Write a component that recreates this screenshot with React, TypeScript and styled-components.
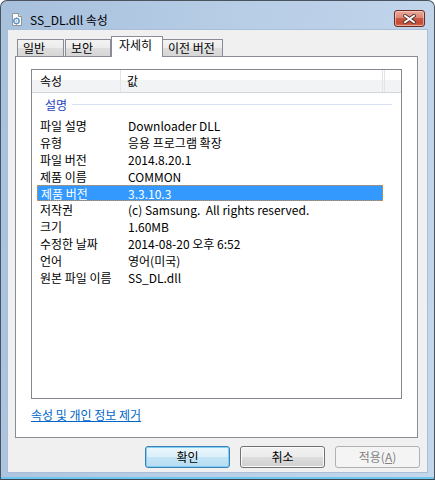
import React from 'react'
import styled, { createGlobalStyle } from 'styled-components'

const GlobalStyle = createGlobalStyle`
  html, body {
    margin: 0;
    padding: 0;
    background: #ffffff;
  }
  body {
    font-family: "Noto Sans CJK KR", "Liberation Sans", sans-serif;
    font-size: 12px;
    color: #000;
  }
`

type Row = { name: string; value: string; selected?: boolean }

const rows: Row[] = [
    { name: '파일 설명', value: 'Downloader DLL' },
    { name: '유형', value: '응용 프로그램 확장' },
    { name: '파일 버전', value: '2014.8.20.1' },
    { name: '제품 이름', value: 'COMMON' },
    { name: '제품 버전', value: '3.3.10.3', selected: true },
    { name: '저작권', value: '(c) Samsung.  All rights reserved.' },
    { name: '크기', value: '1.60MB' },
    { name: '수정한 날짜', value: '2014-08-20 오후 6:52' },
    { name: '언어', value: '영어(미국)' },
    { name: '원본 파일 이름', value: 'SS_DL.dll' },
]

const tabs = [
    { label: '일반', width: 47, ml: 0 },
    { label: '보안', width: 46, ml: 1 },
    { label: '자세히', width: 52, ml: 0, active: true },
    { label: '이전 버전', width: 61, ml: -1 },
]

const DllIcon = () => (
    <svg width="12" height="13" viewBox="0 0 12 13">
        <path d="M1.5 0.5 H7.5 L10.5 3.5 V12.5 H1.5 Z" fill="#fdfdfd" stroke="#8f959c" />
        <path d="M7.5 0.5 V3.5 H10.5" fill="#e4e8ec" stroke="#8f959c" />
        <circle cx="5.5" cy="8" r="2.6" fill="none" stroke="#5b8fc4" strokeWidth="1.4" />
        <circle cx="5.5" cy="8" r="0.9" fill="#9cc1e4" />
        <path d="M5.5 4.6 V5.4 M5.5 10.6 V11.4 M2.1 8 H2.9 M8.1 8 H8.9" stroke="#5b8fc4" strokeWidth="1.2" />
    </svg>
)

export default function App() {
    return (
        <>
            <GlobalStyle />
            <Window>
                <TitleBar>
                    <IconSlot>
                        <DllIcon />
                    </IconSlot>
                    <TitleText>SS_DL.dll 속성</TitleText>
                    <CloseButton type="button">
                        <svg width="13" height="10" viewBox="0 0 13 10">
                            <path d="M2 1.8 L11 8.2 M11 1.8 L2 8.2" stroke="#4a2a26" strokeWidth="3.6" strokeLinecap="square" />
                            <path d="M2 1.8 L11 8.2 M11 1.8 L2 8.2" stroke="#ffffff" strokeWidth="2" strokeLinecap="square" />
                        </svg>
                    </CloseButton>
                </TitleBar>

                <Client>
                    <TabStrip>
                        {tabs.map(t => (
                            <Tab key={t.label} $width={t.width} $ml={t.ml} $active={!!t.active}>
                                {t.label}
                            </Tab>
                        ))}
                    </TabStrip>

                    <Panel>
                        <ListBox>
                            <Header>
                                <HeaderCell $width={89}>속성</HeaderCell>
                                <HeaderCell $width={262} $pad={6}>값</HeaderCell>
                                <HeaderCell $width={2} $pad={0} />
                                <HeaderFill />
                            </Header>

                            <GroupHeading>
                                <GroupLabel>설명</GroupLabel>
                                <GroupLine />
                            </GroupHeading>

                            {rows.map(r => (
                                <ItemRow key={r.name} $selected={!!r.selected}>
                                    <NameCell>{r.name}</NameCell>
                                    <ValueCell>{r.value}</ValueCell>
                                </ItemRow>
                            ))}
                        </ListBox>

                        <RemoveLink href="#">속성 및 개인 정보 제거</RemoveLink>
                    </Panel>

                    <ButtonRow>
                        <DialogButton $variant="default" type="button">확인</DialogButton>
                        <DialogButton $variant="normal" type="button">취소</DialogButton>
                        <DialogButton $variant="disabled" type="button" disabled>
                            적용(<u>A</u>)
                        </DialogButton>
                    </ButtonRow>
                </Client>
            </Window>
        </>
    )
}

const Window = styled.div`
  width: 435px;
  height: 480px;
  box-sizing: border-box;
  border: 1px solid #4a535e;
  border-bottom-color: #3c4652;
  border-radius: 7px 7px 0 0;
  background: linear-gradient(100deg, #a7c0dc 0%, #b7cde6 45%, #c4d7ec 100%);
  display: flex;
  flex-direction: column;
  padding: 0 7px 7px 7px;
  box-shadow: inset 0 -2px 0 #6fc6ec;
`

const TitleBar = styled.div`
  height: 29px;
  flex: none;
  display: flex;
  align-items: flex-start;
  padding: 0 2px 0 3px;
`

const IconSlot = styled.div`
  width: 12px;
  height: 13px;
  margin-top: 11px;
`

const TitleText = styled.div`
  margin-top: 10px;
  margin-left: 7px;
  line-height: 17px;
  font-size: 12px;
  color: #000;
  flex: 1;
`

const CloseButton = styled.button`
  margin-top: 9px;
  width: 31px;
  height: 17px;
  padding: 0;
  box-sizing: border-box;
  border: 1px solid #6b2a22;
  border-radius: 3px;
  display: flex;
  align-items: center;
  justify-content: center;
  background: linear-gradient(#e9a99c 0%, #dc8775 45%, #c75b46 50%, #c24a35 80%, #d5705a 100%);
  box-shadow: inset 0 0 0 1px rgba(255, 220, 210, 0.55);
`

const Client = styled.div`
  flex: 1;
  background: #f0f0f0;
  display: flex;
  flex-direction: column;
  padding: 6px 0 4px 7px;
  box-shadow: 0 0 0 1px #a9bfd8;
`

const TabStrip = styled.div`
  height: 20px;
  display: flex;
  align-items: flex-end;
  padding-left: 2px;
  position: relative;
  z-index: 1;
`

const Tab = styled.div<{ $width: number; $ml: number; $active: boolean }>`
  box-sizing: border-box;
  width: ${p => p.$width}px;
  margin-left: ${p => p.$ml}px;
  height: ${p => (p.$active ? 21 : 17)}px;
  margin-bottom: ${p => (p.$active ? -1 : 0)}px;
  border: 1px solid #898c95;
  border-bottom: none;
  padding-left: ${p => (p.$active ? 7 : 5)}px;
  line-height: ${p => (p.$active ? 15 : 16)}px;
  font-size: 12px;
  white-space: nowrap;
  background: ${p => (p.$active
    ? '#ffffff'
    : 'linear-gradient(#f3f3f3 0%, #ececec 50%, #dedede 51%, #d6d6d6 100%)')};
  position: relative;
  z-index: ${p => (p.$active ? 2 : 1)};
`

const Panel = styled.div`
  height: 382px;
  box-sizing: border-box;
  margin-right: 9px;
  border: 1px solid #898c95;
  background: #ffffff;
  padding: 12px 15px 0 15px;
  display: flex;
  flex-direction: column;
`

const ListBox = styled.div`
  height: 330px;
  box-sizing: border-box;
  border: 1px solid #828790;
  background: #ffffff;
  overflow: hidden;
`

const Header = styled.div`
  height: 23px;
  box-sizing: border-box;
  display: flex;
  border-bottom: 1px solid #d5d5d5;
  background: linear-gradient(#ffffff 0%, #ffffff 45%, #f2f3f5 46%, #f2f3f5 100%);
`

const HeaderCell = styled.div<{ $width: number; $pad?: number }>`
  width: ${p => p.$width}px;
  box-sizing: border-box;
  flex: none;
  border-right: 1px solid #e3e4e6;
  padding-left: ${p => p.$pad ?? 8}px;
  line-height: 22px;
  font-size: 12px;
`

const HeaderFill = styled.div`
  flex: 1;
`

const GroupHeading = styled.div`
  height: 23px;
  display: flex;
  align-items: center;
  padding: 0 9px 1px 13px;
`

const GroupLabel = styled.span`
  color: #1e44bf;
  font-size: 12px;
  line-height: 14px;
`

const GroupLine = styled.div`
  flex: 1;
  height: 1px;
  margin-left: 5px;
  background: #d6e0f1;
`

const ItemRow = styled.div<{ $selected: boolean }>`
  width: 346px;
  height: 17px;
  margin-left: 5px;
  box-sizing: border-box;
  display: grid;
  grid-template-columns: 91px 1fr;
  align-items: center;
  line-height: 16px;
  font-size: 12px;
  ${p => p.$selected
    ? `
      background: #3399ff;
      color: #ffffff;
      border: 1px dotted #f18a1c;
      height: 16px;
      grid-template-columns: 90px 1fr;
      padding-left: 0;
    `
    : ''}
`

const NameCell = styled.span`
  padding-left: 3px;
  white-space: nowrap;
`

const ValueCell = styled.span`
  white-space: pre;
`

const RemoveLink = styled.a`
  margin-top: 9px;
  align-self: flex-start;
  color: #0066cc;
  text-decoration: underline;
  font-size: 12px;
  line-height: 14px;
`

const ButtonRow = styled.div`
  margin-top: 8px;
  display: flex;
  justify-content: flex-end;
  gap: 10px;
  padding-right: 7px;
`

const DialogButton = styled.button<{ $variant: 'default' | 'normal' | 'disabled' }>`
  width: 85px;
  height: 22px;
  box-sizing: border-box;
  padding: 0;
  border-radius: 3px;
  font-family: "Noto Sans CJK KR", "Liberation Sans", sans-serif;
  font-size: 12px;
  line-height: 18px;
  ${p => p.$variant === 'default' && `
    border: 1px solid #3c7fb1;
    background: linear-gradient(#eaf6fd 0%, #dcf0fb 50%, #c4e5f6 51%, #b7dcf2 100%);
    box-shadow: inset 0 0 0 1px #7ed0f5;
    color: #000;
  `}
  ${p => p.$variant === 'normal' && `
    border: 1px solid #707070;
    background: linear-gradient(#f2f2f2 0%, #ebebeb 50%, #dddddd 51%, #cfcfcf 100%);
    box-shadow: inset 0 0 0 1px #fbfbfb;
    color: #000;
  `}
  ${p => p.$variant === 'disabled' && `
    border: 1px solid #adb2b5;
    background: #f4f4f4;
    color: #838383;
  `}

  u {
    text-decoration: underline;
  }
`
